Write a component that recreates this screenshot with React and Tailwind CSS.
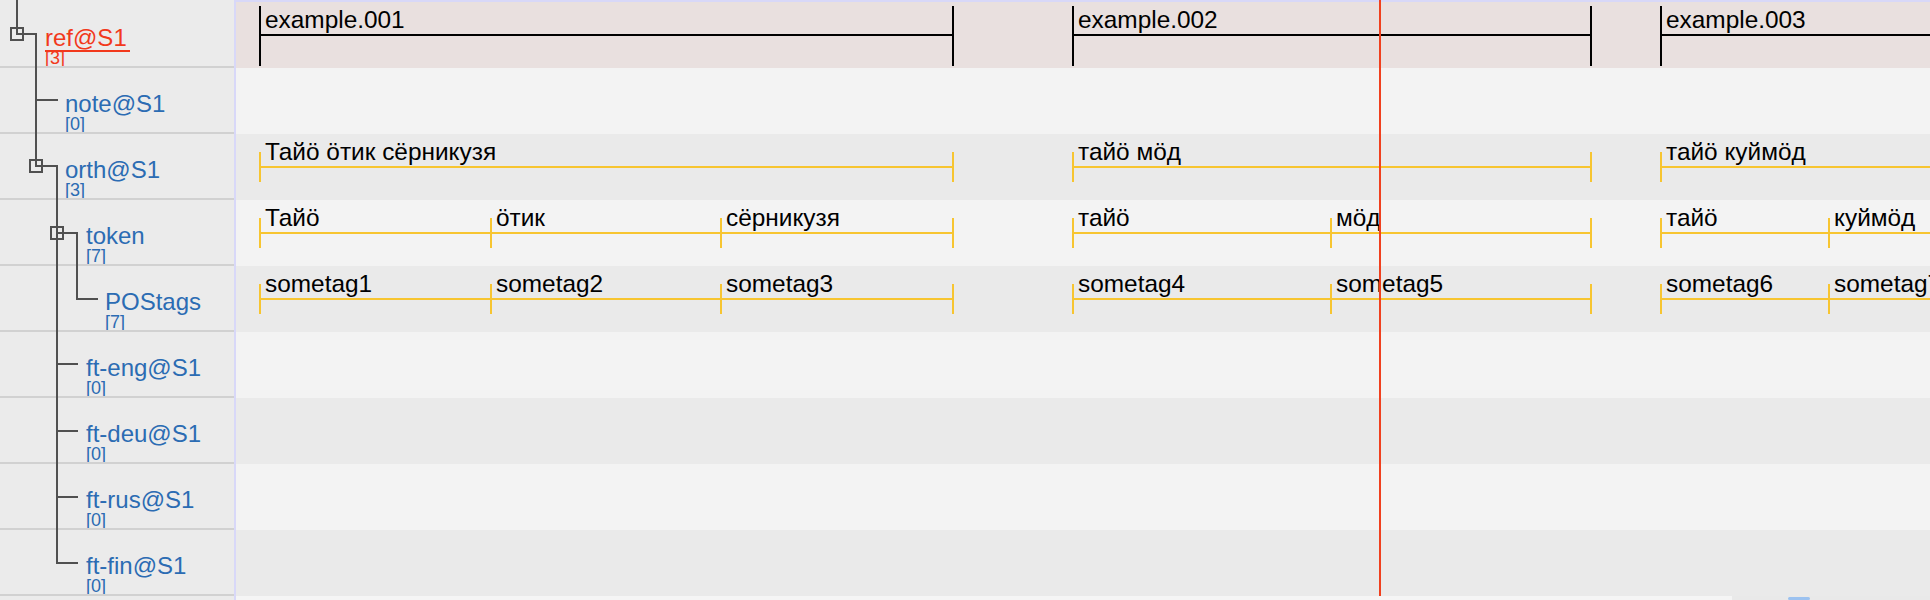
import React from "react";

const tiers = [
  { name: "ref@S1", count: 3, indent: "ml-[45px]", red: true, border: "border-transparent" },
  { name: "note@S1", count: 0, indent: "ml-[65px]", border: "border-[#d1d1d1]" },
  { name: "orth@S1", count: 3, indent: "ml-[65px]", border: "border-[#d1d1d1]" },
  { name: "token", count: 7, indent: "ml-[86px]", border: "border-[#d1d1d1]" },
  { name: "POStags", count: 7, indent: "ml-[105px]", border: "border-[#d1d1d1]" },
  { name: "ft-eng@S1", count: 0, indent: "ml-[86px]", border: "border-[#d1d1d1]" },
  { name: "ft-deu@S1", count: 0, indent: "ml-[86px]", border: "border-[#d1d1d1]" },
  { name: "ft-rus@S1", count: 0, indent: "ml-[86px]", border: "border-[#d1d1d1]" },
  { name: "ft-fin@S1", count: 0, indent: "ml-[86px]", border: "border-[#d1d1d1]" },
];

function TierLabel({ t }) {
  return (
    <div className={`h-[66px] shrink-0 border-t-2 ${t.border} pt-[24px] flex flex-col items-start`}>
      <div className={`${t.indent} flex flex-col items-start`}>
        {t.red ? (
          <div className="text-[24px] leading-[24px] text-[#f2391c] border-b-2 border-[#f2391c] pr-[3px] -mb-[2px] whitespace-nowrap">
            {t.name}
          </div>
        ) : (
          <div className="text-[24px] leading-[24px] text-[#2b6cb3] whitespace-nowrap">{t.name}</div>
        )}
        <div className={`text-[18px] leading-[15px] mt-[1px] ${t.red ? "text-[#f2391c]" : "text-[#2b6cb3]"}`}>
          [{t.count}]
        </div>
      </div>
    </div>
  );
}

function Tree() {
  const c = "#505050";
  return (
    <svg className="absolute left-0 top-0 pointer-events-none" width="234" height="600" viewBox="0 0 234 600" fill="none">
      <g stroke={c} strokeWidth="2" shapeRendering="crispEdges">
        <path d="M17 0 V34 H36 V166 H57 V563 H78" />
        <path d="M36 100 H58" />
        <path d="M57 233 H77 V299 H98" />
        <path d="M57 364 H78" />
        <path d="M57 431 H78" />
        <path d="M57 497 H78" />
        <rect x="11" y="28" width="12" height="12" />
        <rect x="30" y="160" width="12" height="12" />
        <rect x="51" y="227" width="12" height="12" />
      </g>
    </svg>
  );
}

function Seg({ w, text, right, kind }) {
  const isRef = kind === "ref";
  const color = isRef ? "bg-black" : "bg-[#f7c531]";
  const tick = isRef ? "top-[4px] h-[60px]" : "top-[18px] h-[30px]";
  return (
    <div className={`relative h-full shrink-0 ${w}`}>
      <div className={`absolute left-0 w-[2px] ${tick} ${color}`} />
      <div className={`absolute left-0 right-0 top-[32px] ${isRef ? "h-[1.5px]" : "h-[2px]"} ${color}`} />
      {right && <div className={`absolute right-0 w-[2px] ${tick} ${color}`} />}
      <div className="pt-[6px] pl-[6px] text-[24.4px] leading-[24px] text-black whitespace-nowrap">{text}</div>
    </div>
  );
}

const Gap = ({ w }) => <div className={`shrink-0 h-full ${w}`} />;

function RowRef() {
  return (
    <div className="h-[66px] shrink-0 flex bg-[#e9e0df]">
      <Gap w="w-[23px]" />
      <Seg kind="ref" w="w-[695px]" text="example.001" right />
      <Gap w="w-[118px]" />
      <Seg kind="ref" w="w-[520px]" text="example.002" right />
      <Gap w="w-[68px]" />
      <Seg kind="ref" w="w-[700px]" text="example.003" />
    </div>
  );
}

function RowOrth() {
  return (
    <div className="h-[66px] shrink-0 flex bg-[#eaeaea]">
      <Gap w="w-[23px]" />
      <Seg w="w-[695px]" text="Тайӧ ӧтик сёрникузя" right />
      <Gap w="w-[118px]" />
      <Seg w="w-[520px]" text="тайӧ мӧд" right />
      <Gap w="w-[68px]" />
      <Seg w="w-[700px]" text="тайӧ куймӧд" />
    </div>
  );
}

function RowTokens({ bg, words }) {
  return (
    <div className={`h-[66px] shrink-0 flex ${bg}`}>
      <Gap w="w-[23px]" />
      <Seg w="w-[231px]" text={words[0]} />
      <Seg w="w-[230px]" text={words[1]} />
      <Seg w="w-[234px]" text={words[2]} right />
      <Gap w="w-[118px]" />
      <Seg w="w-[258px]" text={words[3]} />
      <Seg w="w-[262px]" text={words[4]} right />
      <Gap w="w-[68px]" />
      <Seg w="w-[168px]" text={words[5]} />
      <Seg w="w-[400px]" text={words[6]} />
    </div>
  );
}

const Empty = ({ bg }) => <div className={`h-[66px] shrink-0 ${bg}`} />;

export default function App() {
  return (
    <div className="w-[1930px] h-[600px] flex overflow-hidden bg-[#eaeaea] font-['Liberation_Sans',Arial,sans-serif]">
      <div className="relative w-[234px] shrink-0 flex flex-col bg-[#ebebeb]">
        {tiers.map((t) => (
          <TierLabel key={t.name} t={t} />
        ))}
        <div className="h-[6px] shrink-0 border-t-2 border-[#d1d1d1]" />
        <Tree />
      </div>
      <div className="w-[2px] shrink-0 bg-[#d8d8f8]" />
      <div className="relative flex-1 min-w-0 flex flex-col overflow-hidden">
        <div className="h-[2px] shrink-0 bg-[#d8d8f8]" />
        <RowRef />
        <Empty bg="bg-[#f3f3f3]" />
        <RowOrth />
        <RowTokens bg="bg-[#f3f3f3]" words={["Тайӧ", "ӧтик", "сёрникузя", "тайӧ", "мӧд", "тайӧ", "куймӧд"]} />
        <RowTokens
          bg="bg-[#eaeaea]"
          words={["sometag1", "sometag2", "sometag3", "sometag4", "sometag5", "sometag6", "sometag7"]}
        />
        <Empty bg="bg-[#f3f3f3]" />
        <Empty bg="bg-[#eaeaea]" />
        <Empty bg="bg-[#f3f3f3]" />
        <Empty bg="bg-[#eaeaea]" />
        <div className="h-[4px] shrink-0 flex">
          <div className="w-[1496px] shrink-0 bg-[#f5f5f5]" />
          <div className="flex-1 bg-[#e9e9e9]">
            <div className="ml-[56px] mt-[1px] w-[22px] h-[3px] rounded-full bg-[#9cc2f0]" />
          </div>
        </div>
        <div className="absolute left-[1143px] top-0 w-[2px] h-[596px] bg-[#f0401e]" />
      </div>
    </div>
  );
}
